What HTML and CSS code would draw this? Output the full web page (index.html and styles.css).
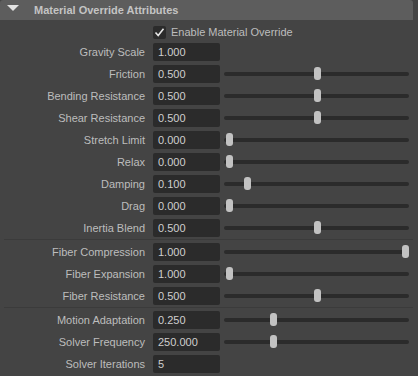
FILE: index.html
```html
<!DOCTYPE html>
<html lang="en">
<head>
    <meta charset="UTF-8">
    <title>Material Override Attributes</title>
    <link rel="stylesheet" href="styles.css">
</head>
<body>
    <div class="panel">
        <div class="section-header">
            <span class="caret"></span>
            <span class="section-title">Material Override Attributes</span>
        </div>

        <div class="section-body">
            <div class="group">
                <div class="row">
                    <span></span>
                    <label class="checkbox">
                        <span class="box">
                            <svg width="13" height="13" viewBox="0 0 13 13">
                                <polyline points="2.5,6.5 5.2,9.5 10.5,2.8" fill="none" stroke="#e6e6e6" stroke-width="1.6"/>
                            </svg>
                        </span>
                        Enable Material Override
                    </label>
                </div>
                <div class="row">
                    <span class="label">Gravity Scale</span>
                    <span class="field">1.000</span>
                </div>
                <div class="row">
                    <span class="label">Friction</span>
                    <span class="field">0.500</span>
                    <div class="slider"><div class="track"></div><div class="handle" style="--v: 0.5"></div></div>
                </div>
                <div class="row">
                    <span class="label">Bending Resistance</span>
                    <span class="field">0.500</span>
                    <div class="slider"><div class="track"></div><div class="handle" style="--v: 0.5"></div></div>
                </div>
                <div class="row">
                    <span class="label">Shear Resistance</span>
                    <span class="field">0.500</span>
                    <div class="slider"><div class="track"></div><div class="handle" style="--v: 0.5"></div></div>
                </div>
                <div class="row">
                    <span class="label">Stretch Limit</span>
                    <span class="field">0.000</span>
                    <div class="slider"><div class="track"></div><div class="handle" style="--v: 0"></div></div>
                </div>
                <div class="row">
                    <span class="label">Relax</span>
                    <span class="field">0.000</span>
                    <div class="slider"><div class="track"></div><div class="handle" style="--v: 0"></div></div>
                </div>
                <div class="row">
                    <span class="label">Damping</span>
                    <span class="field">0.100</span>
                    <div class="slider"><div class="track"></div><div class="handle" style="--v: 0.1"></div></div>
                </div>
                <div class="row">
                    <span class="label">Drag</span>
                    <span class="field">0.000</span>
                    <div class="slider"><div class="track"></div><div class="handle" style="--v: 0"></div></div>
                </div>
                <div class="row">
                    <span class="label">Inertia Blend</span>
                    <span class="field">0.500</span>
                    <div class="slider"><div class="track"></div><div class="handle" style="--v: 0.5"></div></div>
                </div>
            </div>

            <div class="group">
                <div class="row">
                    <span class="label">Fiber Compression</span>
                    <span class="field">1.000</span>
                    <div class="slider"><div class="track"></div><div class="handle" style="--v: 1"></div></div>
                </div>
                <div class="row">
                    <span class="label">Fiber Expansion</span>
                    <span class="field">1.000</span>
                    <div class="slider"><div class="track"></div><div class="handle" style="--v: 0"></div></div>
                </div>
                <div class="row">
                    <span class="label">Fiber Resistance</span>
                    <span class="field">0.500</span>
                    <div class="slider"><div class="track"></div><div class="handle" style="--v: 0.5"></div></div>
                </div>
            </div>

            <div class="group">
                <div class="row">
                    <span class="label">Motion Adaptation</span>
                    <span class="field">0.250</span>
                    <div class="slider"><div class="track"></div><div class="handle" style="--v: 0.25"></div></div>
                </div>
                <div class="row">
                    <span class="label">Solver Frequency</span>
                    <span class="field">250.000</span>
                    <div class="slider"><div class="track"></div><div class="handle" style="--v: 0.25"></div></div>
                </div>
                <div class="row">
                    <span class="label">Solver Iterations</span>
                    <span class="field">5</span>
                </div>
            </div>
        </div>
    </div>
</body>
</html>
```

FILE: styles.css
```css
:root {
    --bg-panel: #444444;
    --bg-header: #5d5d5d;
    --bg-field: #2b2b2b;
    --text-label: #bdbdbd;
    --text-value: #cfcfcf;
    --text-title: #c4c4c4;
    --handle: #c2c2c2;
    --divider: #3b3b3b;
}

* {
    margin: 0;
    padding: 0;
    box-sizing: border-box;
}

body {
    width: 418px;
    height: 376px;
    overflow: hidden;
    background-color: var(--bg-panel);
    font-family: "Liberation Sans", Arial, sans-serif;
    font-size: 11px;
    color: var(--text-label);
}

.section-header {
    display: flex;
    align-items: flex-start;
    height: 20px;
    margin-right: 5px;
    padding-left: 7px;
    background-color: var(--bg-header);
    border-radius: 3px 3px 0 0;
}

.caret {
    width: 0;
    height: 0;
    margin-top: 5px;
    border-left: 6px solid transparent;
    border-right: 6px solid transparent;
    border-top: 6px solid #e2e2e2;
}

.section-title {
    margin-left: 15px;
    line-height: 20px;
    font-weight: bold;
    color: var(--text-title);
}

.section-body {
    padding: 5px 5px 0 4px;
}

.group {
    display: flex;
    flex-direction: column;
    gap: 4px;
}

.group + .group {
    margin-top: 2px;
    padding-top: 3px;
    border-top: 1px solid var(--divider);
}

.row {
    display: grid;
    grid-template-columns: 141px 75px 1fr;
    align-items: center;
    min-height: 14px;
}

.label {
    text-align: right;
    line-height: 18px;
}

.field {
    height: 18px;
    margin-left: 8px;
    padding-left: 5px;
    line-height: 19px;
    background-color: var(--bg-field);
    border-radius: 2px;
    color: var(--text-value);
}

.checkbox {
    grid-column: 2 / 4;
    display: flex;
    align-items: center;
    gap: 5px;
    margin-left: 8px;
    line-height: 14px;
}

.box {
    display: block;
    width: 13px;
    height: 13px;
    background-color: var(--bg-field);
    border-radius: 2px;
}

.box svg {
    display: block;
}

.slider {
    position: relative;
    height: 18px;
    margin: 0 4px;
}

.track {
    position: absolute;
    left: 0;
    right: 0;
    top: 7px;
    height: 4px;
    background-color: var(--bg-field);
    border-radius: 2px;
}

.handle {
    position: absolute;
    top: 2px;
    left: calc(2px + var(--v) * (100% - 9px));
    width: 7px;
    height: 13px;
    background-color: var(--handle);
    border-radius: 3px;
}
```
